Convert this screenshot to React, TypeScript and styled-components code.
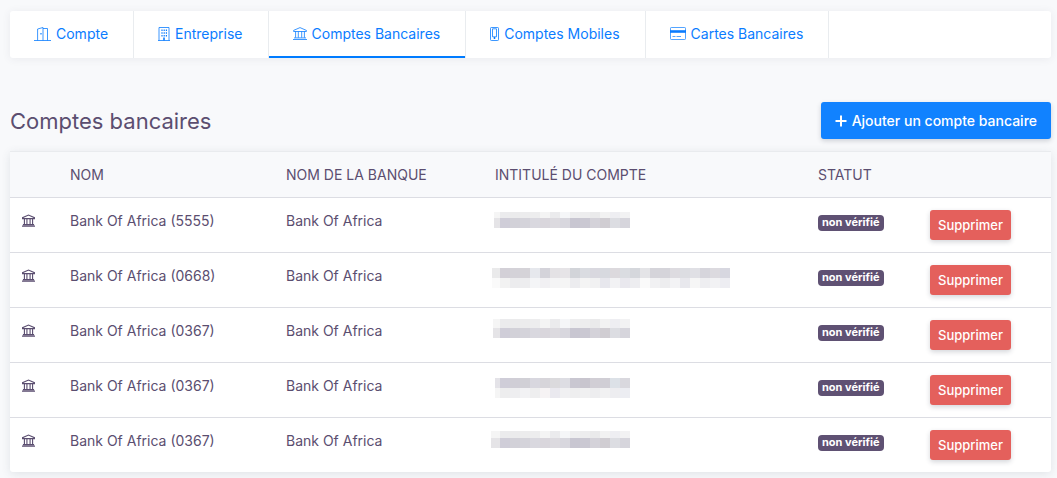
import React from 'react';
import styled, { createGlobalStyle } from 'styled-components';

const GlobalStyle = createGlobalStyle`
  *, *::before, *::after { box-sizing: border-box; }
  body {
    margin: 0;
    background: #f8f9fb;
    color: #5b4e70;
    font-family: Inter, "Liberation Sans", sans-serif;
    font-size: 14px;
    line-height: 21px;
  }
`;

const Page = styled.main`
  padding: 11px 6px 6px 10px;
`;

const TabBar = styled.nav`
  display: flex;
  background: #fff;
  border-radius: 3px;
  box-shadow: 0 1px 8px rgba(60, 70, 90, 0.08);
`;

const Tab = styled.a<{ $active?: boolean }>`
  display: flex;
  align-items: center;
  gap: 5px;
  padding: 12px 25px 14px 24px;
  border-right: 1px solid #e9ecef;
  box-shadow: ${(p) => (p.$active ? 'inset 0 -2px #007bff' : 'none')};
  color: #0a7cff;
  line-height: 21px;
  text-decoration: none;
  white-space: nowrap;
`;

const Icon = styled.svg`
  display: block;
  flex: none;
  fill: none;
  stroke: currentColor;
`;

const TitleRow = styled.header`
  display: flex;
  align-items: center;
  justify-content: space-between;
  margin: 44px 0 12px;
`;

const Title = styled.h1`
  margin: 0;
  font-size: 22px;
  font-weight: 400;
  line-height: 28px;
`;

const AddButton = styled.button`
  display: flex;
  align-items: center;
  gap: 5px;
  padding: 8px 14px;
  border: 0;
  border-radius: 3px;
  background: #1182ff;
  box-shadow: 0 2px 5px rgba(40, 50, 70, 0.2);
  color: #fff;
  font: 500 14px/21px Inter, "Liberation Sans", sans-serif;
  cursor: pointer;
`;

const Table = styled.table`
  width: 100%;
  table-layout: fixed;
  border-collapse: separate;
  border-spacing: 0;
  border-radius: 3px;
  background: #fff;
  box-shadow: 0 2px 10px rgba(60, 70, 90, 0.12);
`;

const Col = styled.col<{ $width: number }>`
  width: ${(p) => p.$width}px;
`;

const HeadCell = styled.th`
  padding: 12px;
  border-top: 1px solid #e9ebee;
  background: #f8f9fb;
  font-weight: 400;
  text-align: left;
  text-transform: uppercase;
  white-space: nowrap;
`;

const Cell = styled.td`
  padding: 12px;
  border-top: 1px solid #dcdde3;
  vertical-align: top;
  white-space: nowrap;
`;

const RowIcon = styled.span`
  display: flex;
  align-items: center;
  height: 21px;
`;

const Badge = styled.span`
  display: block;
  width: fit-content;
  margin-top: 5px;
  padding: 0 4px 1px;
  border-radius: 4px;
  background: #5f5173;
  color: #fff;
  font-size: 11px;
  font-weight: 700;
  line-height: 15px;
`;

const DeleteButton = styled.button`
  display: block;
  padding: 6px 8px;
  border: 0;
  border-radius: 3px;
  background: #e4605c;
  box-shadow: 0 2px 5px rgba(40, 50, 70, 0.2);
  color: #fff;
  font: 500 13px/18px Inter, "Liberation Sans", sans-serif;
  cursor: pointer;
`;

const Mask = styled.div<{ $count: number; $lead: number; $top: number; $first: number }>`
  display: grid;
  grid-template-columns: ${(p) => p.$lead}px repeat(${(p) => p.$count - 1}, 10px);
  grid-template-rows: ${(p) => p.$first}px 10px;
  margin: ${(p) => p.$top}px 0 0 ${(p) => 5 - p.$lead}px;
`;

const Pixel = styled.span<{ $color: string }>`
  background: #${(p) => p.$color};
`;

const lightRow = 'f5f5f5 ebebed ebebec ececed ededee f4f4f4 ebebed f5f6f8 eeeeef ededee eaeaeb f2f2f2 eeeef2 f2f2f3'.split(' ');
const darkRow = 'e5e4e7 cfcdd8 d2d1d8 d4d3da d9d8df d9d6dc dcdadf d8d7de c8c6d1 cac8d2 d4d2d9 d0cdd2 dcdde2 d6d5dc'.split(' ');

type Masked = { lead: number; top: number; first: number; rows: string[][] };
type Account = { name: string; bank: string; mask: Masked };

const accounts: Account[] = [
  { name: 'Bank Of Africa (5555)', bank: 'Bank Of Africa', mask: { lead: 6, top: 2, first: 6, rows: [lightRow, darkRow] } },
  {
    name: 'Bank Of Africa (0668)',
    bank: 'Bank Of Africa',
    mask: {
      lead: 8,
      top: 3,
      first: 10,
      rows: [
        'eaeaeb d3d0d7 d4d2d8 d5d3d8 e6e8ed d4d3da e4e2e5 e6e4e7 d2d4d9 dadce1 d9d8df d7d9df dcd9dd dadce1 d5d7dc e4e4e7 d5d4da d5d4da dddbe0 dcdde2 e0e0e5 d6d5dc dcdadf d7d7e0'.split(' '),
        'fafafa f2f2f2 ececee ededef f4f5f7 f1f0f3 f4f4f5 f5f5f5 ececef f4f4f4 f1f1f2 e7e7ed f2f2f4 e9e8ee ededf0 fafafa f1f1f3 ededef f3f3f5 e8e8ed f6f6f6 eeeef1 f2f2f4 ededf2'.split(' '),
      ],
    },
  },
  { name: 'Bank Of Africa (0367)', bank: 'Bank Of Africa', mask: { lead: 7, top: -1, first: 9, rows: [lightRow, darkRow] } },
  {
    name: 'Bank Of Africa (0367)',
    bank: 'Bank Of Africa',
    mask: {
      lead: 5,
      top: 3,
      first: 10,
      rows: [
        'e4e3e8 cfcdd8 d0ced6 d1d0d6 d8d7df d7d5da dbdadd dddde3 c9c7d1 c8c5ce d1ced5 d0ced5 dce1e7 d9d8de'.split(' '),
        'f5f5f5 ededee eeeef0 f2f2f4 eeeeef f6f3f4 eae9ef f0f0f2 eeeeef f0f0f1 ededef f1f1f2 ededf0 ecedf2'.split(' '),
      ],
    },
  },
  { name: 'Bank Of Africa (0367)', bank: 'Bank Of Africa', mask: { lead: 9, top: 1, first: 7, rows: [lightRow, darkRow] } },
];

const DoorIcon = () => (
  <Icon width="17" height="14" viewBox="0 0 17 14" strokeWidth="0.8" aria-hidden="true">
    <path d="M0 13.5h17M3.6 13.5V2L9 .5v13M9 1.5h4.5v12" />
    <path d="M7 6v1.6" strokeWidth="1.2" />
  </Icon>
);

const BuildingIcon = () => (
  <Icon width="12" height="14" viewBox="0 0 12 14" aria-hidden="true">
    <path d="M0 13.5h12M1 13.5V.5h10v13" strokeWidth="0.8" />
    <path d="M4 2.5v7M6.2 2.5v7M8.4 2.5v7" strokeWidth="1.2" strokeDasharray="1.4 1.4" />
    <path d="M6 10.5v3" strokeWidth="1.6" />
  </Icon>
);

const BankIcon = ({ bold }: { bold?: boolean }) => (
  <Icon width={bold ? 13 : 14} height="13" viewBox="0 0 14 13" strokeWidth={bold ? 1.2 : 0.8} aria-hidden="true">
    <path d="M.6 4.5V3.4L7 .6l6.4 2.8v1.1zM0 12.5h14M1 10.9h12M2.6 4.5v6.2M5.3 4.5v6.2M8.7 4.5v6.2M11.4 4.5v6.2" />
  </Icon>
);

const PhoneIcon = () => (
  <Icon width="9" height="14" viewBox="0 0 9 14" strokeWidth="0.8" aria-hidden="true">
    <rect x="0.5" y="0.5" width="8" height="13" rx="0.8" />
    <path d="M2.5 1.8h4v8h-4z" />
    <path d="M4.5 10v2" strokeWidth="1.5" />
  </Icon>
);

const CardIcon = () => (
  <Icon width="16" height="13" viewBox="0 0 16 13" strokeWidth="0.7" aria-hidden="true">
    <rect x="0.5" y="0.5" width="15" height="12" rx="0.8" />
    <path d="M0 4.5h16" strokeWidth="2.6" />
    <path d="M2.5 9.5h3M6.5 9.5h4.5" />
  </Icon>
);

const PlusIcon = () => (
  <Icon width="12" height="12" viewBox="0 0 12 12" strokeWidth="2" aria-hidden="true">
    <path d="M6 .5v11M.5 6h11" />
  </Icon>
);

const tabs = [
  { label: 'Compte', icon: <DoorIcon /> },
  { label: 'Entreprise', icon: <BuildingIcon /> },
  { label: 'Comptes Bancaires', icon: <BankIcon />, active: true },
  { label: 'Comptes Mobiles', icon: <PhoneIcon /> },
  { label: 'Cartes Bancaires', icon: <CardIcon /> },
];

const columnWidths = [48, 216, 209, 323, 112, 133];
const headings = ['', 'Nom', 'Nom de la banque', 'Intitulé du compte', 'Statut', ''];

export default function App() {
  return (
    <>
      <GlobalStyle />
      <Page>
        <TabBar>
          {tabs.map((t) => (
            <Tab key={t.label} href="#" $active={t.active} aria-current={t.active ? 'page' : undefined}>
              {t.icon}
              {t.label}
            </Tab>
          ))}
        </TabBar>
        <TitleRow>
          <Title>Comptes bancaires</Title>
          <AddButton type="button">
            <PlusIcon />
            Ajouter un compte bancaire
          </AddButton>
        </TitleRow>
        <Table>
          <colgroup>
            {columnWidths.map((w, i) => (
              <Col key={i} $width={w} />
            ))}
          </colgroup>
          <thead>
            <tr>
              {headings.map((h, i) => (
                <HeadCell key={i} scope="col">{h}</HeadCell>
              ))}
            </tr>
          </thead>
          <tbody>
            {accounts.map((a, i) => (
              <tr key={i}>
                <Cell><RowIcon><BankIcon bold /></RowIcon></Cell>
                <Cell>{a.name}</Cell>
                <Cell>{a.bank}</Cell>
                <Cell>
                  <Mask $count={a.mask.rows[0].length} $lead={a.mask.lead} $top={a.mask.top} $first={a.mask.first}>
                    {a.mask.rows.flat().map((c, n) => (
                      <Pixel key={n} $color={c} />
                    ))}
                  </Mask>
                </Cell>
                <Cell><Badge>non vérifié</Badge></Cell>
                <Cell><DeleteButton type="button">Supprimer</DeleteButton></Cell>
              </tr>
            ))}
          </tbody>
        </Table>
      </Page>
    </>
  );
}
